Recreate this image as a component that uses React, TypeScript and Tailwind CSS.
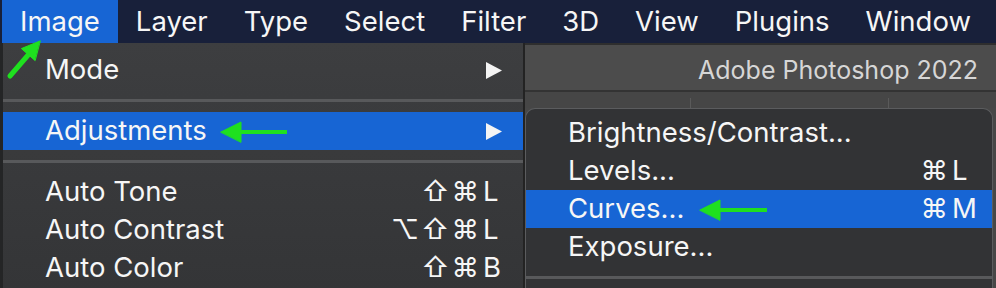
import React from 'react';

const font = { fontFamily: 'Inter, "Noto Sans", sans-serif' };

const topMenu = ['Image', 'Layer', 'Type', 'Select', 'Filter', '3D', 'View', 'Plugins', 'Window'];

const Arrow = () => (
  <svg width="18" height="17" viewBox="0 0 18 17" className="block">
    <path d="M1 0 L17 8.5 L1 17 Z" fill="#f4f4f4" />
  </svg>
);

const Shortcut = ({ mods, k }: { mods: string; k: string }) => (
  <span className="flex items-center">
    <span className="text-right tracking-[2px]">{mods}</span>
    <span className="w-[20px] ml-[2px]">{k}</span>
  </span>
);

const Row = ({
  label,
  right,
  active,
}: {
  label: string;
  right?: React.ReactNode;
  active?: boolean;
}) => (
  <div
    className={`h-[38px] flex items-center justify-between pl-[42px] pr-[20px] ${
      active ? 'bg-[#1765d4]' : ''
    }`}
  >
    <span>{label}</span>
    {right}
  </div>
);

const Sep = ({ className = '' }: { className?: string }) => (
  <div className={`h-[3px] bg-[#58595b] ${className}`} />
);

export default function App() {
  return (
    <div
      className="relative w-[996px] h-[288px] overflow-hidden flex flex-col bg-[#3a3b3d] text-[#f6f6f6] text-[27.5px] leading-none"
      style={font}
    >
      {/* menu bar */}
      <div className="h-[43px] flex items-stretch bg-[#18203a] pl-[2px] shrink-0">
        {topMenu.map((m, i) => (
          <div
            key={m}
            className={`flex items-center px-[18px] pt-[1px] ${i === 0 ? 'bg-[#1765d4]' : ''}`}
          >
            {m}
          </div>
        ))}
      </div>

      <div className="flex flex-1 min-h-0">
        <div className="w-[3px] bg-[#242526]" />

        {/* Image menu */}
        <div className="w-[520px] bg-gradient-to-b from-[#3d3e40] to-[#343537] pt-[8px]">
          <Row label="Mode" right={<Arrow />} />
          <Sep className="my-[10px]" />
          <Row label="Adjustments" right={<Arrow />} active />
          <Sep className="my-[10px]" />
          <Row label="Auto Tone" right={<Shortcut mods="⇧⌘" k="L" />} />
          <Row label="Auto Contrast" right={<Shortcut mods="⌥⇧⌘" k="L" />} />
          <Row label="Auto Color" right={<Shortcut mods="⇧⌘" k="B" />} />
        </div>

        <div className="w-[2px] bg-[#232323]" />

        {/* application window behind */}
        <div className="flex-1 flex flex-col bg-[#474747]">
          <div className="h-[2px] bg-[#2e2e2e]" />
          <div className="h-[45px] flex items-center justify-end pr-[18px] pt-[5px] bg-[#4c4c4c] text-[#d6d6d6] text-[25px]">
            Adobe Photoshop 2022
          </div>
          <div className="h-[2px] bg-[#333333]" />
          <div className="h-[16px] bg-[#464646] relative">
            <div className="absolute left-[165px] top-[6px] w-px h-[10px] bg-[#5a5a5a]" />
            <div className="absolute left-[363px] top-[6px] w-px h-[10px] bg-[#5a5a5a]" />
          </div>

          {/* Adjustments submenu */}
          <div className="flex-1 mr-[3px] rounded-t-[10px] border border-b-0 border-[#5b5c5e] bg-[#323335] pt-[5px]">
            <Row label="Brightness/Contrast..." />
            <Row label="Levels..." right={<Shortcut mods="⌘" k="L" />} />
            <Row label="Curves..." right={<Shortcut mods="⌘" k="M" />} active />
            <Row label="Exposure..." />
            <Sep className="mt-[10px]" />
          </div>
        </div>
      </div>

      {/* green annotation arrows */}
      <svg className="absolute inset-0 pointer-events-none" width="996" height="288">
        <g fill="#1fe01f" stroke="#1fe01f" strokeWidth="5" strokeLinecap="round">
          <line x1="10" y1="76" x2="29" y2="54" />
          <path d="M40 41 L21.4 48.6 L34.9 60.4 Z" strokeWidth="1" />
          <line x1="238" y1="132" x2="287" y2="132" strokeWidth="4" strokeLinecap="butt" />
          <path d="M221 132 L241 122 L241 142 Z" strokeWidth="1" />
          <line x1="717" y1="210" x2="767" y2="210" strokeWidth="4" strokeLinecap="butt" />
          <path d="M700 210 L720 200 L720 220 Z" strokeWidth="1" />
        </g>
      </svg>
    </div>
  );
}
